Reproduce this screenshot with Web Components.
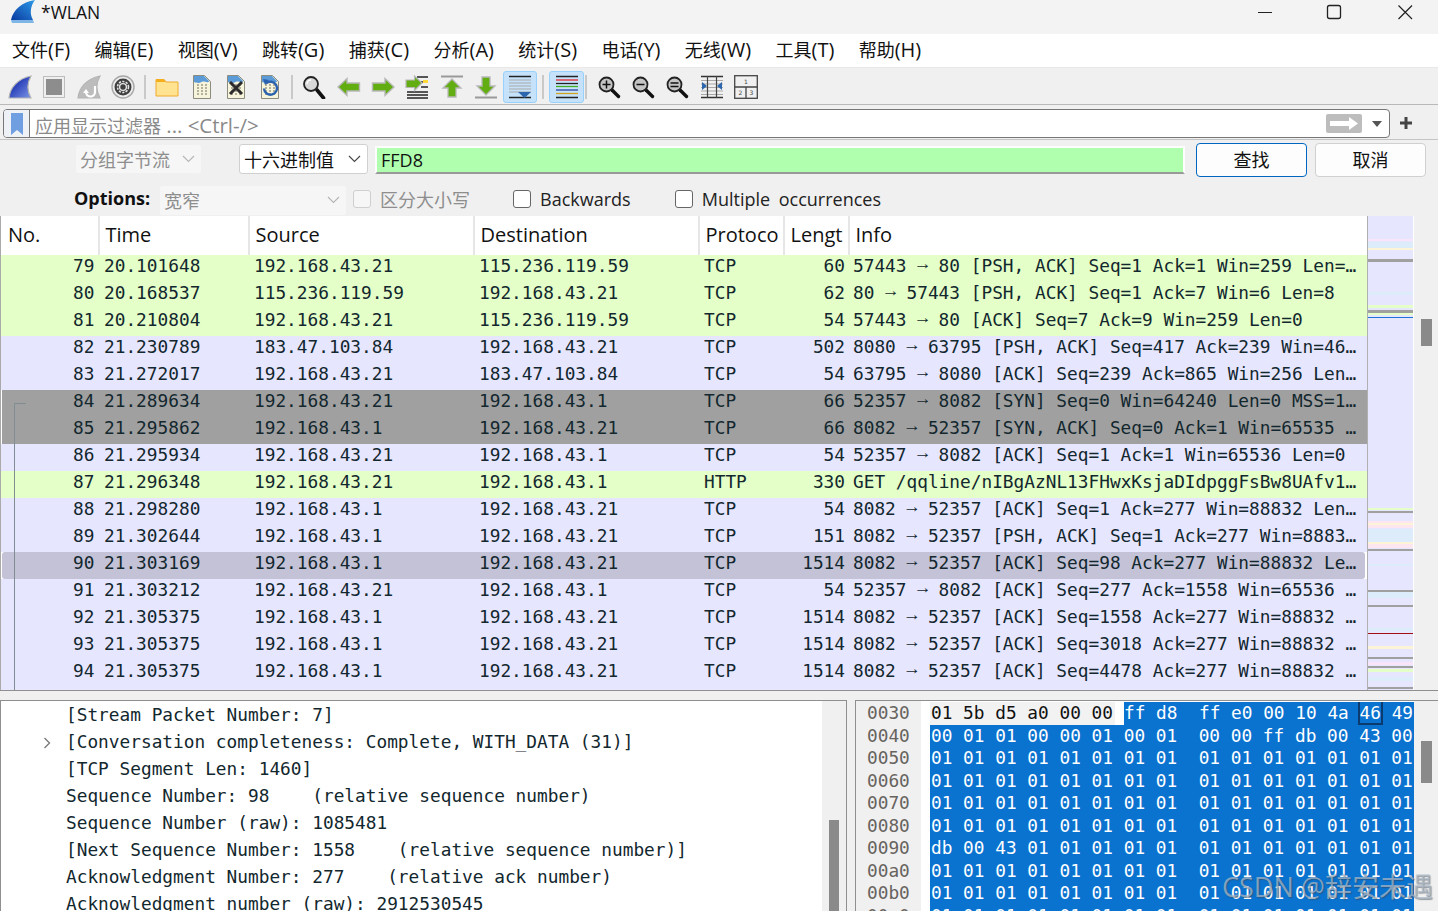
<!DOCTYPE html>
<html lang="zh">
<head>
<meta charset="utf-8">
<title>*WLAN</title>
<style>
  html, body { margin: 0; height: 100%; overflow: hidden; background: #f0f0f0; }
  body { font-family: "Open Sans", "Noto Sans CJK SC", sans-serif; color: #111; }
  ws-app { width: 1438px; height: 911px; }
</style>
</head>
<body>
<ws-app>
  <ws-titlebar title-text="*WLAN"></ws-titlebar>
  <ws-menubar></ws-menubar>
  <ws-toolbar></ws-toolbar>
  <ws-filterbar></ws-filterbar>
  <ws-findbar></ws-findbar>
  <ws-packet-list></ws-packet-list>
  <ws-bottom>
    <ws-details></ws-details>
    <ws-bytes></ws-bytes>
  </ws-bottom>
</ws-app>

<script>
const UI_FONT = '"Open Sans", "Noto Sans CJK SC", sans-serif';
const MONO_FONT = '"DejaVu Sans Mono", "Liberation Mono", monospace';

const page = `<path d="M3.500 .5h11l6 6v17h-17z" fill="#f6f4da" stroke="#8b8b80"/><path d="M4 1h10l5.500 5.500c-3 2-5-1-8 .5s-4 1-7.500 0z" fill="#5b9bd8"/><path d="M7 10h2M11 10h2M15 10h2M7 13h2M11 13h2M15 13h2M7 16h2M11 16h2M15 16h2M7 19h2M11 19h2M15 19h2" stroke="#9a9a88" stroke-width="1.400"/>`;
const lens = `<path d="M15 15l6.500 6.500" stroke="#111" stroke-width="3.400" stroke-linecap="round"/><circle cx="9.500" cy="9.500" r="7" fill="#c4c4c4" stroke="#222" stroke-width="1.800"/>`;
const fin = c => `<path d="M1 23C2 13 9 4 23 1c-4 7-4 15 0 22z" fill="${c}" stroke="#b4b4b4" stroke-width="1.200"/>`;

const ICONS = {
  shark: `<defs><linearGradient id="f" x1="1" y1="1" x2="0" y2="0"><stop offset="0" stop-color="#7d96e6"/><stop offset=".6" stop-color="#2f46bc"/><stop offset="1" stop-color="#2f46bc"/></linearGradient></defs>` + fin('url(#f)'),
  stop: `<rect x="1.500" y="1.500" width="21" height="21" fill="#efefef" stroke="#bdbdbd"/><rect x="4" y="4" width="16" height="16" fill="#8d8d8d"/>`,
  restart: fin('#bcbcbc') + `<path d="M18 11v6a4.500 4.500 0 0 1-9 0" fill="none" stroke="#fff" stroke-width="2.200"/><path d="M6 18l3-4 3 4z" fill="#fff"/>`,
  options: `<circle cx="12" cy="12" r="11" fill="#eee" stroke="#a8a8a8" stroke-width="1.400"/><circle cx="12" cy="12" r="8.500" fill="#3f3f3f"/><circle cx="12" cy="12" r="5.500" fill="none" stroke="#e4e4e4" stroke-width="1.600" stroke-dasharray="2.200 1.300"/><circle cx="12" cy="12" r="3.400" fill="#3f3f3f" stroke="#e4e4e4" stroke-width="1.400"/>`,
  folder: `<path d="M1 21V4.500h8l2 2.500h12v14z" fill="#ffe391" stroke="#eeab2e"/><path d="M1 4h8l2 3H1z" fill="#f5ae1e"/>`,
  file: page,
  close: page + `<path d="M6 7l12 12M18 7L6 19" stroke="#2b2b2b" stroke-width="3"/>`,
  reload: page + `<path d="M8 8.500a6.500 6.500 0 1 1-2 5" fill="none" stroke="#2a62b0" stroke-width="2.400"/><path d="M5 4l6 1-4 5z" fill="#2a62b0"/>`,
  find: `<g transform="translate(-2 0)"><path d="M16 15l6.500 8" stroke="#111" stroke-width="3.600" stroke-linecap="round"/><circle cx="10" cy="9" r="7" fill="#d8d8d8" stroke="#222" stroke-width="1.800"/><path d="M6 9a4 4 0 0 1 4-4" stroke="#fff" stroke-width="1.400" fill="none"/></g>`,
  back: `<path d="M1 12l9-8.500V8h12.500v8H10v4.500z" fill="#62ad12" stroke="#b8b8b8" stroke-width="1.400"/>`,
  forward: `<path d="M23 12l-9-8.500V8H1.500v8H14v4.500z" fill="#62ad12" stroke="#b8b8b8" stroke-width="1.400"/>`,
  goto: `<path d="M12 2h11M16 7h7M16 12h7M2 17h21M2 20h21M2 23h21" stroke="#222" stroke-width="1.400"/><path d="M18 5h5v3h-5z" fill="#ffd83a"/><path d="M17 8l-7.500-7v4H1v7.500h8.500v3z" fill="#62ad12" stroke="#b8b8b8" stroke-width="1.200"/>`,
  top: `<path d="M1 1.500h22" stroke="#9a9a9a" stroke-width="2"/><path d="M12 4l9 9h-5v9H8v-9H3z" fill="#62ad12" stroke="#b8b8b8" stroke-width="1.300"/>`,
  bottom: `<path d="M1 22.500h22" stroke="#9a9a9a" stroke-width="2"/><path d="M12 20l9-9h-5V2H8v9H3z" fill="#62ad12" stroke="#b8b8b8" stroke-width="1.300"/>`,
  autoscroll: `<path d="M1 1.500h22M1 22.500h22" stroke="#222" stroke-width="1.300"/><path d="M1 5h22M1 8h22M1 11h22M1 14h22M1 17h22" stroke="#a9a9a9"/><path d="M10 17h13l-6.500 6z" fill="#2c66ad"/>`,
  colorize: `<path d="M1 1.500h22M1 22.500h22" stroke="#222" stroke-width="1.300"/><g stroke-width="1.300"><path d="M1 5h22" stroke="#e3262c"/><path d="M1 8.500h22" stroke="#222"/><path d="M1 11.500h22" stroke="#3fae1e"/><path d="M1 15h22" stroke="#27439c"/><path d="M1 18.500h22" stroke="#d2a11e"/></g>`,
  zoomin: lens + `<path d="M5.500 9.500h8M9.500 5.500v8" stroke="#111" stroke-width="1.500"/>`,
  zoomout: lens + `<path d="M5.500 9.500h8" stroke="#111" stroke-width="1.500"/>`,
  zoomnormal: lens + `<path d="M5.500 8h8M5.500 11.500h8" stroke="#111" stroke-width="1.500"/>`,
  columns: `<path d="M1 1.500h22M1 22.500h22" stroke="#333" stroke-width="1.300"/><path d="M1 5.500h22M1 9h22M1 12.500h22M1 16h22M1 19.500h22" stroke="#a9a9a9"/><path d="M7.500 1v22M16.500 1v22" stroke="#444" stroke-width="1.200"/><path d="M2 7l5 4-5 4zM22 7l-5 4 5 4z" fill="#2c66ad"/>`,
  layout: `<rect x=".7" y=".7" width="22.600" height="22.600" fill="none" stroke="#444" stroke-width="1.300"/><path d="M1 12h22M12 12v11" stroke="#444" stroke-width="1.300"/><g font-family="DejaVu Sans" font-size="6" fill="#444" text-anchor="middle"><text x="12" y="9">1</text><text x="6.500" y="20">2</text><text x="17.500" y="20">3</text></g>`
};

// small shared icon element, size comes from the size attribute
class WsIcon extends HTMLElement {
  connectedCallback() {
    const name = this.getAttribute('name');
    const w = this.getAttribute('size') || 24;
    this.attachShadow({ mode: 'open' });
    this.shadowRoot.innerHTML = `
      <style>:host { display: block; width: ${w}px; height: ${w}px; } svg { display: block; }</style>
      <svg width="${w}" height="${w}" viewBox="0 0 24 24">${ICONS[name] || ''}</svg>`;
  }
}

class WsApp extends HTMLElement {
  connectedCallback() {
    this.attachShadow({ mode: 'open' });
    this.shadowRoot.innerHTML = `
      <style>:host { display: flex; flex-direction: column; position: relative; overflow: hidden; }
      .mark { position: absolute; left: 1222px; top: 866px; font: 27px "Open Sans", "Noto Sans CJK SC", sans-serif; white-space: nowrap;
        color: rgba(170, 185, 200, .72); text-shadow: 1px 1px 1px rgba(60, 70, 80, .5); }</style>
      <slot></slot><div class="mark">CSDN @辞安未遇</div>`;
  }
}

class WsTitlebar extends HTMLElement {
  connectedCallback() {
    this.attachShadow({ mode: 'open' });
    this.shadowRoot.innerHTML = `
      <style>
        :host { display: flex; height: 34px; flex: none; background: #f3f3f3; align-items: flex-start; font: 17.500px ${UI_FONT}; }
        .logo { margin-left: 11px; width: 25px; height: 23px; }
        .name { margin-left: 5px; line-height: 24px; }
        .ctl { margin-left: auto; display: flex; margin-right: -1px; }
        .ctl svg { display: block; width: 70px; height: 24px; }
      </style>
      <svg class="logo" viewBox="0 0 25 23"><defs><linearGradient id="g" x1="0" y1="1" x2="1" y2="0"><stop offset="0" stop-color="#0a3aa0"/><stop offset="1" stop-color="#2d9be8"/></linearGradient></defs>
        <path d="M0 20C2 10 11 2 24 0c-4 5-6 13-2 20z" fill="url(#g)"/><path d="M0 20h22l1 3H1z" fill="#7fb6e6"/></svg>
      <span class="name">${this.getAttribute('title-text')}</span>
      <div class="ctl">
        <svg viewBox="0 0 70 24"><path d="M29 12.500h14" stroke="#222"/></svg>
        <svg viewBox="0 0 70 24"><rect x="28.500" y="5.500" width="13" height="13" rx="2" fill="none" stroke="#222" stroke-width="1.300"/></svg>
        <svg viewBox="0 0 70 24"><path d="M29.500 5.500l13.500 13.500M43 5.500L29.500 19" stroke="#222" stroke-width="1.200"/></svg>
      </div>`;
  }
}

class WsMenubar extends HTMLElement {
  connectedCallback() {
    const items = [['文件', 'F'], ['编辑', 'E'], ['视图', 'V'], ['跳转', 'G'], ['捕获', 'C'], ['分析', 'A'],
      ['统计', 'S'], ['电话', 'Y'], ['无线', 'W'], ['工具', 'T'], ['帮助', 'H']];
    this.attachShadow({ mode: 'open' });
    this.shadowRoot.innerHTML = `
      <style>
        :host { display: flex; height: 33px; flex: none; background: #fff; font: 18px ${UI_FONT}; align-items: center; padding-left: 12px; }
        span { white-space: nowrap; line-height: 32px; margin-right: 24.400px; padding-bottom: 1px; }
        s { text-decoration: none; font-size: 20px; }
      </style>
      ${items.map(i => `<span>${i[0]}<s>(${i[1]})</s></span>`).join('')}`;
  }
}

class WsToolbar extends HTMLElement {
  connectedCallback() {
    const groups = [
      [['shark', 'stop', 'restart', 'options'], 10, 4],
      [['folder', 'file', 'close', 'reload'], 10, 4],
      [['find', 'back', 'forward', 'goto', 'top', 'bottom', 'autoscroll'], 12, 5],
      [['colorize'], 8, 1],
      [['zoomin', 'zoomout', 'zoomnormal', 'columns', 'layout'], 0, 0]
    ];
    const btn = n => {
      const on = n === 'autoscroll' || n === 'colorize';
      return `<div class="b${on ? ' on' : ''}"><ws-icon name="${n}"></ws-icon></div>`;
    };
    this.attachShadow({ mode: 'open' });
    this.shadowRoot.innerHTML = `
      <style>
        :host { display: flex; height: 38px; flex: none; box-sizing: border-box; background: #f0f0f0; padding: 1px 0 0 3px; align-items: center;
          border-top: 1px solid #e8e8e8; border-bottom: 1px solid #b9b9b9; }
        .b { width: 34.300px; height: 32px; box-sizing: border-box; display: flex; align-items: center; justify-content: center; flex: none; border: 1px solid transparent; }
        .on { background: #c6e2fb; border-color: #98d1fc; border-radius: 3px; }
        .s { flex: none; height: 24px; display: flex; justify-content: flex-start; }
        .s i { display: block; width: 2px; height: 24px; background: #c9c9c9; }
      </style>
      ${groups.map(g => g[0].map(btn).join('') +
        (g[1] ? `<div class="s" style="width:${g[1]}px;padding-left:${g[2]}px;box-sizing:border-box"><i></i></div>` : '')).join('')}`;
  }
}

class WsFilterbar extends HTMLElement {
  connectedCallback() {
    this.attachShadow({ mode: 'open' });
    this.shadowRoot.innerHTML = `
      <style>
        :host { display: flex; height: 35px; flex: none; box-sizing: border-box; background: #f0f0f0; padding: 4px 0 0 3px; border-bottom: 1px solid #c4c4c4; font: 18px ${UI_FONT}; }
        .box { width: 1387px; height: 29px; box-sizing: border-box; background: #fff; border: 1.500px solid #777; border-radius: 4px; display: flex; align-items: center; }
        .mark { width: 26px; height: 100%; box-sizing: border-box; border-right: 1.500px solid #777; display: flex; align-items: center; justify-content: center; background: #eef1f5; border-radius: 3px 0 0 3px; }
        .txt { margin-left: 5px; padding-top: 2px; color: #8a8a8a; flex: 1; white-space: nowrap; }
        .txt s { text-decoration: none; font-size: 20.400px; }
        .go { width: 36px; height: 19px; margin-right: 10.500px; background: #bdbdbd; border-radius: 2px; display: flex; align-items: center; justify-content: center; }
        .drop { width: 0; height: 0; border: 5.500px solid transparent; border-top: 6px solid #555; border-bottom: 0; margin-right: 7px; }
        .plus { width: 12px; height: 12px; margin: 8px 0 0 10px; }
      </style>
      <div class="box">
        <div class="mark"><svg width="14" height="22" viewBox="0 0 14 22"><path d="M1 0h12v22l-6-5-6 5z" fill="#6f9fe0"/></svg></div>
        <span class="txt">应用显示过滤器<s> ... &lt;Ctrl-/&gt;</s></span>
        <div class="go"><svg width="30" height="13" viewBox="0 0 30 13"><path d="M1 4h19V0l9 6.500-9 6.500V9H1z" fill="#fff"/></svg></div>
        <div class="drop"></div>
      </div>
      <svg class="plus" viewBox="0 0 12 12"><path d="M6 0v12M0 6h12" stroke="#444" stroke-width="3"/></svg>`;
  }
}

class WsSelect extends HTMLElement {
  connectedCallback() {
    const off = this.hasAttribute('disabled');
    this.attachShadow({ mode: 'open' });
    this.shadowRoot.innerHTML = `
      <style>
        :host { display: flex; flex: none; align-items: center; box-sizing: border-box; height: 30px; padding: 0 6px 1px 4px; border-radius: 3px; font: 18px ${UI_FONT};
          background: ${off ? '#f6f6f6' : '#fff'}; color: ${off ? '#8e8e8e' : '#111'}; border: 1px solid ${off ? '#f0f0f0' : '#d0d0d0'}; }
        span { flex: 1; white-space: nowrap; }
        svg { flex: none; }
      </style>
      <span><slot></slot></span>
      <svg width="13" height="8" viewBox="0 0 13 8"><path d="M1 1l5.500 5.500L12 1" fill="none" stroke="${off ? '#b5b5b5' : '#444'}" stroke-width="1.100"/></svg>`;
  }
}

class WsCheck extends HTMLElement {
  connectedCallback() {
    const off = this.hasAttribute('disabled');
    this.attachShadow({ mode: 'open' });
    this.shadowRoot.innerHTML = `
      <style>
        :host { display: flex; flex: none; align-items: center; font: 18px ${UI_FONT}; word-spacing: 4px; color: ${off ? '#8e8e8e' : '#222'}; white-space: nowrap; margin-top: -2px; }
        i { display: block; width: 18px; height: 18px; box-sizing: border-box; margin-right: 9px; border-radius: 3px; background: ${off ? '#f6f6f6' : '#fff'}; border: 1px solid ${off ? '#cfcfcf' : '#666'}; }
      </style>
      <i></i><slot></slot>`;
  }
}

class WsFindbar extends HTMLElement {
  connectedCallback() {
    this.attachShadow({ mode: 'open' });
    this.shadowRoot.innerHTML = `
      <style>
        :host { display: block; height: 76px; flex: none; background: #f0f0f0; font: 18px ${UI_FONT}; }
        .r1 { display: flex; align-items: center; height: 34px; margin-top: 3px; padding-left: 75px; }
        .r1 ws-select { margin-top: -2px; }
        .input { width: 810px; height: 28px; margin-left: 7px; box-sizing: border-box; background: #afffaf; border: 2px solid #fdfdfd; border-bottom-color: #999; padding-left: 4px; line-height: 24px; flex: none; }
        .btn { height: 34px; box-sizing: border-box; flex: none; display: flex; align-items: center; justify-content: center; border-radius: 4px; background: #fdfdfd; border: 1px solid #d0d0d0; padding-bottom: 2px; }
        .find { width: 111px; margin-left: 11px; border: 1.500px solid #0067c0; }
        .cancel { width: 111px; margin-left: 8px; }
        .r2 { display: flex; align-items: center; height: 32px; margin-top: 7px; padding-left: 74px; }
        b { font-weight: 700; margin-right: 9px; line-height: 29px; padding-bottom: 3px; flex: none; }
      </style>
      <div class="r1">
        <ws-select disabled style="width:127px">分组字节流</ws-select>
        <ws-select style="width:129px;margin-left:37px">十六进制值</ws-select>
        <div class="input">FFD8</div>
        <div class="btn find">查找</div>
        <div class="btn cancel">取消</div>
      </div>
      <div class="r2">
        <b>Options:</b>
        <ws-select disabled style="width:188px;height:31px">宽窄</ws-select>
        <ws-check disabled style="margin-left:6px">区分大小写</ws-check>
        <ws-check style="margin-left:43px">Backwards</ws-check>
        <ws-check style="margin-left:44px">Multiple occurrences</ws-check>
      </div>`;
  }
}

const A = '192.168.43.21', B = '192.168.43.1';
const PACKETS = [
  [79, '20.101648', A, '115.236.119.59', 'TCP', 60, '57443 → 80 [PSH, ACK] Seq=1 Ack=1 Win=259 Len=…', 'g'],
  [80, '20.168537', '115.236.119.59', A, 'TCP', 62, '80 → 57443 [PSH, ACK] Seq=1 Ack=7 Win=6 Len=8', 'g'],
  [81, '20.210804', A, '115.236.119.59', 'TCP', 54, '57443 → 80 [ACK] Seq=7 Ack=9 Win=259 Len=0', 'g'],
  [82, '21.230789', '183.47.103.84', A, 'TCP', 502, '8080 → 63795 [PSH, ACK] Seq=417 Ack=239 Win=46…', 'p'],
  [83, '21.272017', A, '183.47.103.84', 'TCP', 54, '63795 → 8080 [ACK] Seq=239 Ack=865 Win=256 Len…', 'p'],
  [84, '21.289634', A, B, 'TCP', 66, '52357 → 8082 [SYN] Seq=0 Win=64240 Len=0 MSS=1…', 'd'],
  [85, '21.295862', B, A, 'TCP', 66, '8082 → 52357 [SYN, ACK] Seq=0 Ack=1 Win=65535 …', 'd'],
  [86, '21.295934', A, B, 'TCP', 54, '52357 → 8082 [ACK] Seq=1 Ack=1 Win=65536 Len=0', 'p'],
  [87, '21.296348', A, B, 'HTTP', 330, 'GET /qqline/nIBgAzNL13FHwxKsjaDIdpggFsBw8UAfv1…', 'g'],
  [88, '21.298280', B, A, 'TCP', 54, '8082 → 52357 [ACK] Seq=1 Ack=277 Win=88832 Len…', 'p'],
  [89, '21.302644', B, A, 'TCP', 151, '8082 → 52357 [PSH, ACK] Seq=1 Ack=277 Win=8883…', 'p'],
  [90, '21.303169', B, A, 'TCP', 1514, '8082 → 52357 [ACK] Seq=98 Ack=277 Win=88832 Le…', 's'],
  [91, '21.303212', A, B, 'TCP', 54, '52357 → 8082 [ACK] Seq=277 Ack=1558 Win=65536 …', 'p'],
  [92, '21.305375', B, A, 'TCP', 1514, '8082 → 52357 [ACK] Seq=1558 Ack=277 Win=88832 …', 'p'],
  [93, '21.305375', B, A, 'TCP', 1514, '8082 → 52357 [ACK] Seq=3018 Ack=277 Win=88832 …', 'p'],
  [94, '21.305375', B, A, 'TCP', 1514, '8082 → 52357 [ACK] Seq=4478 Ack=277 Win=88832 …', 'p'],
  [95, '21.305375', B, A, 'TCP', 1514, '8082 → 52357 [ACK] Seq=5938 Ack=277 Win=88832 …', 'p']
];

// y ranges of the packet map, colours as in the scrollbar overview
const STRIPES = [
  [239, 2, '#f9e4f9'], [242, 6, '#dcecfb'], [248, 2, '#fdf3d6'], [259, 3, '#a0a0a0'], [292, 3, '#dcecfb'], [305, 3, '#e4ffc7'],
  [310, 3, '#a0a0a0'], [313, 2, '#e4ffc7'], [317, 1, '#1976d2'], [508, 2, '#e4ffc7'], [511, 2, '#a0a0a0'], [521, 2, '#fde6f0'],
  [523, 2, '#fdf3d6'], [525, 3, '#fde6f0'], [529, 13, '#dcecfb'], [542, 2, '#fdf3d6'], [544, 4, '#fde6f0'], [549, 2, '#a0a0a0'],
  [564, 2, '#dcecfb'], [590, 2, '#a0a0a0'], [592, 6, '#dcecfb'], [605, 2, '#a0a0a0'], [628, 3, '#dcecfb'], [633, 1, '#a01010'],
  [646, 3, '#fdf3d6'], [657, 2, '#a0a0a0'], [662, 3, '#f9e4f9'], [666, 2, '#a0a0a0'], [669, 3, '#e4ffc7'], [677, 4, '#dcecfb'],
  [687, 2, '#a0a0a0'], [690, 1, '#a0a0a0']
];

class WsPacketList extends HTMLElement {
  connectedCallback() {
    this.attachShadow({ mode: 'open' });
    this.shadowRoot.innerHTML = `
      <style>
        :host { display: flex; height: 475px; flex: none; box-sizing: border-box; border-bottom: 1px solid #8f8f8f; background: #f0f0f0; }
        .table { width: 1367px; flex: none; position: relative; overflow: hidden; background: #fff; border-left: 1px solid #aaa; box-sizing: border-box; }
        .head { display: grid; grid-template-columns: 99px 150px 225px 225px 85px 65px 1fr; height: 39px; font: 20px/38px ${UI_FONT}; color: #111; }
        .head span { border-right: 2px solid #e6e6e6; padding-left: 5.500px; box-sizing: border-box; white-space: nowrap; overflow: hidden; }
        .head span:first-child { padding-left: 7px; }
        .head span:last-child { border: 0; }
        .row { display: grid; grid-template-columns: 99px 150px 225px 225px 85px 64px 1fr; height: 27px; font: 17.800px/21px ${MONO_FONT}; color: #12272e; white-space: pre; }
        .row span { padding-left: 4px; overflow: hidden; }
        .row .n { text-align: right; padding: 0 5.500px 0 0; }
        .row .l { text-align: right; padding: 0 4px 0 0; }
        .row u { text-decoration: none; font-family: "Liberation Mono", monospace; position: relative; top: -3px; }
        .g { background: #e4ffc7; } .p { background: #e7e6ff; }
        .d, .s { margin-left: 1px; grid-template-columns: 98px 150px 225px 225px 85px 64px 1fr; }
        .d { background: #a0a0a0; }
        .s { background: #c4c2d6; border-radius: 3px; margin-right: 2px; }
        .link { position: absolute; left: 13px; top: 187px; width: 11px; height: 300px; border: 1px solid #808d92; border-width: 1px 0 0 1px; }
        .map { width: 45px; flex: none; position: relative; border-left: 1px solid #b0b0b0; border-right: 1px solid #fff; background: #e7e6ff; }
        .map svg { display: block; }
        .bar { flex: 1; position: relative; }
        .thumb { position: absolute; left: 7px; top: 103px; width: 11px; height: 27px; background: #8a8a8a; }
      </style>
      <div class="table">
        <div class="head"><span>No.</span><span>Time</span><span>Source</span><span>Destination</span><span>Protoco</span><span>Lengt</span><span>Info</span></div>
        ${PACKETS.map(p => `<div class="row ${p[7]}"><span class="n">${p[0]}</span><span>${p[1]}</span><span>${p[2]}</span><span>${p[3]}</span><span>${p[4]}</span><span class="l">${p[5]}</span><span>${p[6].replace('→', '<u>→</u>')}</span></div>`).join('')}
        <div class="link"></div>
      </div>
      <div class="map"><svg width="45" height="474">${STRIPES.map(s => `<rect x="0" y="${s[0] - 216}" width="45" height="${s[1]}" fill="${s[2]}"/>`).join('')}</svg></div>
      <div class="bar"><div class="thumb"></div></div>`;
  }
}

class WsBottom extends HTMLElement {
  connectedCallback() {
    this.attachShadow({ mode: 'open' });
    this.shadowRoot.innerHTML = `
      <style>:host { display: flex; flex: 1; min-height: 0; padding-top: 9px; background: #f0f0f0; gap: 8px; overflow: hidden; }</style>
      <slot></slot>`;
  }
}

class WsDetails extends HTMLElement {
  connectedCallback() {
    const lines = [
      '[Stream Packet Number: 7]',
      '[Conversation completeness: Complete, WITH_DATA (31)]',
      '[TCP Segment Len: 1460]',
      'Sequence Number: 98    (relative sequence number)',
      'Sequence Number (raw): 1085481',
      '[Next Sequence Number: 1558    (relative sequence number)]',
      'Acknowledgment Number: 277    (relative ack number)',
      'Acknowledgment number (raw): 2912530545'
    ];
    this.attachShadow({ mode: 'open' });
    this.shadowRoot.innerHTML = `
      <style>
        :host { display: flex; width: 847px; flex: none; box-sizing: border-box; border: 1px solid #8f8f8f; border-bottom: 0; background: #fff; overflow: hidden; }
        .tree { flex: 1; min-width: 0; padding-left: 65px; font: 17.800px/27px ${MONO_FONT}; color: #12272e; white-space: pre; }
        .line { height: 27px; position: relative; }
        .line svg { position: absolute; left: -23px; top: 9px; }
        .bar { width: 24px; flex: none; background: #f0f0f0; position: relative; }
        .thumb { position: absolute; left: 7px; top: 119px; width: 10px; height: 100px; background: #8a8a8a; }
      </style>
      <div class="tree">${lines.map((l, i) => `<div class="line">${i === 1 ? '<svg width="8" height="12" viewBox="0 0 8 12"><path d="M1.500 1l5 5-5 5" fill="none" stroke="#777" stroke-width="1.300"/></svg>' : ''}${l}</div>`).join('')}</div>
      <div class="bar"><div class="thumb"></div></div>`;
  }
}

class WsBytes extends HTMLElement {
  connectedCallback() {
    const ones = '01 01 01 01 01 01 01 01  01 01 01 01 01 01 01 01';
    const hex = [
      '00 01 01 00 00 01 00 01  00 00 ff db 00 43 00 01',
      ones, ones, ones, ones,
      'db 00 43 01 01 01 01 01  01 01 01 01 01 01 01 01',
      ones, ones, ones
    ];
    const offs = ['0030', '0040', '0050', '0060', '0070', '0080', '0090', '00a0', '00b0', '00c0'];
    this.attachShadow({ mode: 'open' });
    // no whitespace between the divs in .pane, it is white-space: pre in here
    this.shadowRoot.innerHTML = `
      <style>
        :host { flex: 1; display: flex; min-width: 0; box-sizing: border-box; border: 1px solid #8f8f8f; border-width: 1px 0 0 1px; background: #fff; overflow: hidden; font: 17.800px/22.500px ${MONO_FONT}; }
        .off { width: 65px; flex: none; background: #f0f0f0; color: #67635e; padding: 1px 0 0 11px; box-sizing: border-box; white-space: pre; }
        .pane { width: 484px; flex: none; margin-left: 9px; padding-top: 1px; overflow: hidden; white-space: pre; }
        .h { height: 22.500px; padding-left: 1px; background: #0a72cf; color: #fff; overflow: hidden; }
        .first { display: flex; background: #fff; padding: 0; }
        .grey { background: #f2f2f2; color: #111; padding: 0 2px 0 1px; }
        .gap { width: 9px; flex: none; }
        .rest { flex: 1; background: #0a72cf; color: #fff; }
        .cur { outline: 2px solid #0b3a6e; outline-offset: -1px; padding: 1px 1px; margin: 0 -1px; }
        .bar { flex: 1; background: #f0f0f0; position: relative; }
        .thumb { position: absolute; left: 7px; top: 40px; width: 11px; height: 42px; background: #8a8a8a; }
      </style><div class="off">${offs.join('\n')}</div><div class="pane"><div class="h first"><span class="grey">01 5b d5 a0 00 00</span><span class="gap"></span><span class="rest">ff d8  ff e0 00 10 4a <span class="cur">46</span> 49</span></div>${hex.map(h => `<div class="h">${h}</div>`).join('')}</div><div class="bar"><div class="thumb"></div></div>`;
  }
}

customElements.define('ws-icon', WsIcon);
customElements.define('ws-app', WsApp);
customElements.define('ws-titlebar', WsTitlebar);
customElements.define('ws-menubar', WsMenubar);
customElements.define('ws-toolbar', WsToolbar);
customElements.define('ws-filterbar', WsFilterbar);
customElements.define('ws-select', WsSelect);
customElements.define('ws-check', WsCheck);
customElements.define('ws-findbar', WsFindbar);
customElements.define('ws-packet-list', WsPacketList);
customElements.define('ws-bottom', WsBottom);
customElements.define('ws-details', WsDetails);
customElements.define('ws-bytes', WsBytes);
</script>
</body>
</html>
